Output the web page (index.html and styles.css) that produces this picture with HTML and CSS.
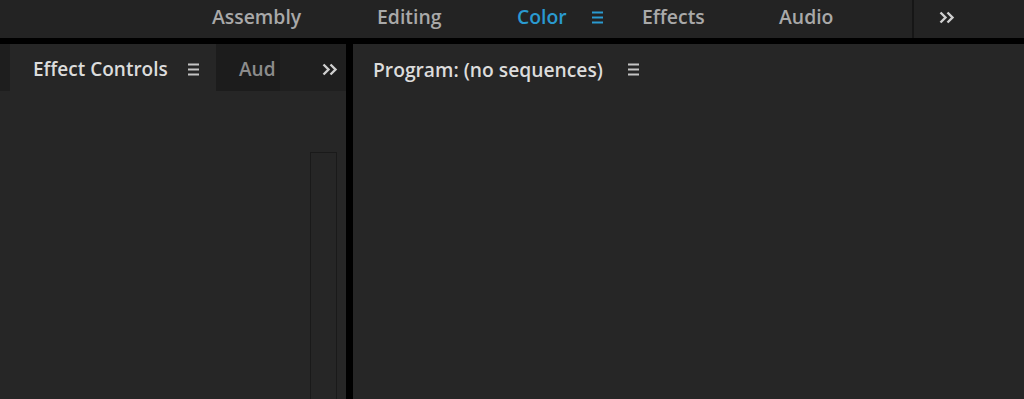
FILE: index.html
```html
<!DOCTYPE html>
<html lang="en">
<head>
    <meta charset="UTF-8">
    <title>Premiere - Color workspace</title>
    <link rel="stylesheet" href="styles.css">
</head>
<body>
    <div id="workspace-bar">
        <div class="ws-item ws-assembly">Assembly</div>
        <div class="ws-item ws-editing">Editing</div>
        <div class="ws-item ws-color active">Color</div>
        <div class="ws-menu">
            <svg width="11" height="13" viewBox="0 0 11 13"><path d="M0 1.5h11M0 6.5h11M0 11.5h11" stroke="#2a9ad0" stroke-width="2"/></svg>
        </div>
        <div class="ws-item ws-effects">Effects</div>
        <div class="ws-item ws-audio">Audio</div>
        <div class="ws-more">
            <svg width="17" height="13" viewBox="0 0 17 13"><path d="M1.5 1.5l5 5-5 5M8.5 1.5l5 5-5 5" fill="none" stroke="#cfcfcf" stroke-width="2.4"/></svg>
        </div>
    </div>

    <div id="panels">
        <div class="panel panel-left">
            <div class="tab-row">
                <div class="tab-stub"></div>
                <div class="tab tab-active">
                    <span>Effect Controls</span>
                    <svg class="tab-menu" width="11" height="13" viewBox="0 0 11 13"><path d="M0 1.5h11M0 6.5h11M0 11.5h11" stroke="#c4c4c4" stroke-width="1.8"/></svg>
                </div>
                <div class="tab tab-inactive">Aud</div>
                <div class="tab-overflow">
                    <svg width="17" height="13" viewBox="0 0 17 13"><path d="M1.5 1.5l5 5-5 5M8.5 1.5l5 5-5 5" fill="none" stroke="#cfcfcf" stroke-width="2.4"/></svg>
                </div>
            </div>
            <div class="panel-body">
                <div class="scroll-track"></div>
            </div>
        </div>

        <div class="panel panel-right">
            <div class="tab-row">
                <div class="tab tab-active tab-program">
                    <span>Program: (no sequences)</span>
                    <svg class="tab-menu" width="11" height="13" viewBox="0 0 11 13"><path d="M0 1.5h11M0 6.5h11M0 11.5h11" stroke="#c4c4c4" stroke-width="1.8"/></svg>
                </div>
            </div>
            <div class="panel-body"></div>
        </div>
    </div>
</body>
</html>
```

FILE: styles.css
```css
body {
    margin: 0;
    height: 399px;
    overflow: hidden;
    background-color: #000;
    font-family: "Open Sans", Arial, sans-serif;
    font-weight: 600;
    display: flex;
    flex-direction: column;
}

#workspace-bar {
    height: 38px;
    background-color: #232323;
    display: flex;
    align-items: center;
    padding-left: 212px;
    font-size: 19.4px;
    color: #a9a9a9;
    flex-shrink: 0;
}

.ws-item {
    line-height: 34px;
    padding-bottom: 4px;
    white-space: nowrap;
}

.ws-assembly { width: 165px; }
.ws-editing { width: 140px; }
.ws-color { width: 75px; }
.ws-effects { width: 137px; }
.ws-audio { width: 133px; }

.ws-item.active {
    color: #2a9ad0;
}

.ws-menu {
    width: 50px;
    display: flex;
    align-items: center;
    padding-bottom: 4px;
}

.ws-more {
    height: 38px;
    border-left: 2px solid #161616;
    padding-left: 25px;
    display: flex;
    align-items: center;
    padding-bottom: 4px;
    box-sizing: border-box;
}

#panels {
    margin-top: 6px;
    flex: 1;
    display: flex;
    gap: 7px;
    min-height: 0;
}

.panel {
    background-color: #262626;
    display: flex;
    flex-direction: column;
}

.panel-left {
    width: 346px;
}

.panel-right {
    flex: 1;
}

.tab-row {
    height: 47px;
    display: flex;
    flex-shrink: 0;
}

.tab-stub {
    width: 10px;
    background-color: #1e1e1e;
}

.tab {
    display: flex;
    align-items: center;
    font-size: 19px;
    white-space: nowrap;
    padding-top: 3px;
    box-sizing: border-box;
}

.tab-active {
    width: 206px;
    padding-left: 23px;
    color: #dcdcdc;
}

.tab-menu {
    margin-left: 20px;
}

.tab-inactive {
    width: 64px;
    padding-left: 23px;
    background-color: #1c1c1c;
    color: #8c8c8c;
}

.tab-overflow {
    flex: 1;
    background-color: #1f1f1f;
    display: flex;
    align-items: center;
    justify-content: flex-end;
    padding-right: 7px;
    padding-top: 3px;
}

.tab-program {
    width: auto;
    padding-left: 20px;
    font-size: 19.25px;
}

.tab-program .tab-menu {
    margin-left: 25px;
}

.panel-body {
    flex: 1;
    position: relative;
}

.scroll-track {
    position: absolute;
    left: 310px;
    top: 61px;
    width: 25px;
    bottom: -2px;
    border: 1px solid #1a1a1a;
}
```
